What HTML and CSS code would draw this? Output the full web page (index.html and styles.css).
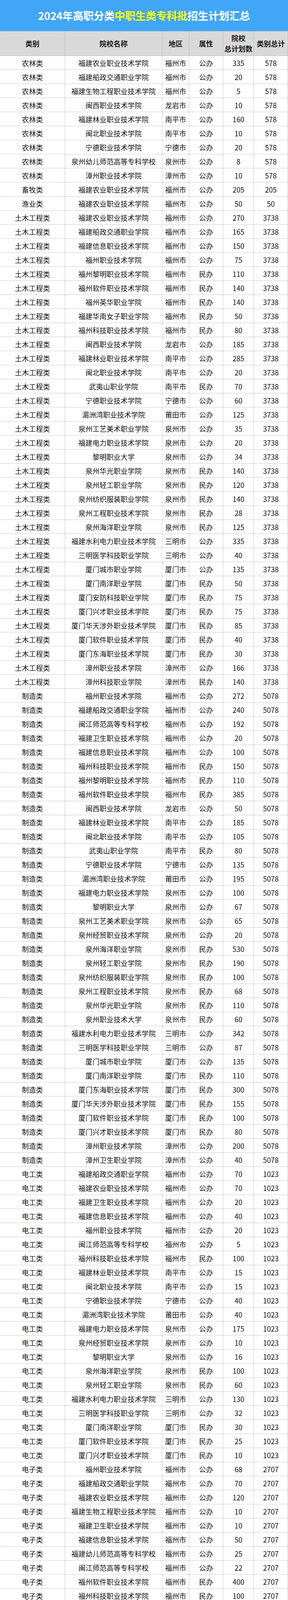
FILE: index.html
```html
<!DOCTYPE html>
<html lang="zh-CN">
<head>
<meta charset="utf-8">
<title>2024年高职分类中职生类专科批招生计划汇总</title>
<link rel="stylesheet" href="styles.css">
</head>
<body>
<div class="sheet" role="table">
  <div class="title">2024年高职分类<span class="hl">中职生类专科批</span>招生计划汇总</div>
  <div class="row head" role="row"><div class="cell" role="columnheader">类别</div><div class="cell" role="columnheader">院校名称</div><div class="cell" role="columnheader">地区</div><div class="cell" role="columnheader">属性</div><div class="cell" role="columnheader">院校<br>总计划数</div><div class="cell" role="columnheader">类别总计</div></div>
  <div class="row"><div class="cell">农林类</div><div class="cell">福建农业职业技术学院</div><div class="cell">福州市</div><div class="cell">公办</div><div class="cell">335</div><div class="cell">578</div></div>
  <div class="row"><div class="cell">农林类</div><div class="cell">福建船政交通职业学院</div><div class="cell">福州市</div><div class="cell">公办</div><div class="cell">20</div><div class="cell">578</div></div>
  <div class="row"><div class="cell">农林类</div><div class="cell">福建生物工程职业技术学院</div><div class="cell">福州市</div><div class="cell">公办</div><div class="cell">5</div><div class="cell">578</div></div>
  <div class="row"><div class="cell">农林类</div><div class="cell">闽西职业技术学院</div><div class="cell">龙岩市</div><div class="cell">公办</div><div class="cell">10</div><div class="cell">578</div></div>
  <div class="row"><div class="cell">农林类</div><div class="cell">福建林业职业技术学院</div><div class="cell">南平市</div><div class="cell">公办</div><div class="cell">160</div><div class="cell">578</div></div>
  <div class="row"><div class="cell">农林类</div><div class="cell">闽北职业技术学院</div><div class="cell">南平市</div><div class="cell">公办</div><div class="cell">10</div><div class="cell">578</div></div>
  <div class="row"><div class="cell">农林类</div><div class="cell">宁德职业技术学院</div><div class="cell">宁德市</div><div class="cell">公办</div><div class="cell">20</div><div class="cell">578</div></div>
  <div class="row"><div class="cell">农林类</div><div class="cell">泉州幼儿师范高等专科学校</div><div class="cell">泉州市</div><div class="cell">公办</div><div class="cell">8</div><div class="cell">578</div></div>
  <div class="row"><div class="cell">农林类</div><div class="cell">漳州职业技术学院</div><div class="cell">漳州市</div><div class="cell">公办</div><div class="cell">10</div><div class="cell">578</div></div>
  <div class="row"><div class="cell">畜牧类</div><div class="cell">福建农业职业技术学院</div><div class="cell">福州市</div><div class="cell">公办</div><div class="cell">205</div><div class="cell">205</div></div>
  <div class="row"><div class="cell">渔业类</div><div class="cell">福建农业职业技术学院</div><div class="cell">福州市</div><div class="cell">公办</div><div class="cell">50</div><div class="cell">50</div></div>
  <div class="row"><div class="cell">土木工程类</div><div class="cell">福建农业职业技术学院</div><div class="cell">福州市</div><div class="cell">公办</div><div class="cell">270</div><div class="cell">3738</div></div>
  <div class="row"><div class="cell">土木工程类</div><div class="cell">福建船政交通职业学院</div><div class="cell">福州市</div><div class="cell">公办</div><div class="cell">165</div><div class="cell">3738</div></div>
  <div class="row"><div class="cell">土木工程类</div><div class="cell">福建信息职业技术学院</div><div class="cell">福州市</div><div class="cell">公办</div><div class="cell">150</div><div class="cell">3738</div></div>
  <div class="row"><div class="cell">土木工程类</div><div class="cell">福州职业技术学院</div><div class="cell">福州市</div><div class="cell">公办</div><div class="cell">75</div><div class="cell">3738</div></div>
  <div class="row"><div class="cell">土木工程类</div><div class="cell">福州黎明职业技术学院</div><div class="cell">福州市</div><div class="cell">民办</div><div class="cell">110</div><div class="cell">3738</div></div>
  <div class="row"><div class="cell">土木工程类</div><div class="cell">福州软件职业技术学院</div><div class="cell">福州市</div><div class="cell">民办</div><div class="cell">140</div><div class="cell">3738</div></div>
  <div class="row"><div class="cell">土木工程类</div><div class="cell">福州英华职业学院</div><div class="cell">福州市</div><div class="cell">民办</div><div class="cell">140</div><div class="cell">3738</div></div>
  <div class="row"><div class="cell">土木工程类</div><div class="cell">福建华南女子职业学院</div><div class="cell">福州市</div><div class="cell">民办</div><div class="cell">50</div><div class="cell">3738</div></div>
  <div class="row"><div class="cell">土木工程类</div><div class="cell">福州科技职业技术学院</div><div class="cell">福州市</div><div class="cell">民办</div><div class="cell">80</div><div class="cell">3738</div></div>
  <div class="row"><div class="cell">土木工程类</div><div class="cell">闽西职业技术学院</div><div class="cell">龙岩市</div><div class="cell">公办</div><div class="cell">185</div><div class="cell">3738</div></div>
  <div class="row"><div class="cell">土木工程类</div><div class="cell">福建林业职业技术学院</div><div class="cell">南平市</div><div class="cell">公办</div><div class="cell">285</div><div class="cell">3738</div></div>
  <div class="row"><div class="cell">土木工程类</div><div class="cell">闽北职业技术学院</div><div class="cell">南平市</div><div class="cell">公办</div><div class="cell">20</div><div class="cell">3738</div></div>
  <div class="row"><div class="cell">土木工程类</div><div class="cell">武夷山职业学院</div><div class="cell">南平市</div><div class="cell">民办</div><div class="cell">70</div><div class="cell">3738</div></div>
  <div class="row"><div class="cell">土木工程类</div><div class="cell">宁德职业技术学院</div><div class="cell">宁德市</div><div class="cell">公办</div><div class="cell">60</div><div class="cell">3738</div></div>
  <div class="row"><div class="cell">土木工程类</div><div class="cell">湄洲湾职业技术学院</div><div class="cell">莆田市</div><div class="cell">公办</div><div class="cell">125</div><div class="cell">3738</div></div>
  <div class="row"><div class="cell">土木工程类</div><div class="cell">泉州工艺美术职业学院</div><div class="cell">泉州市</div><div class="cell">公办</div><div class="cell">35</div><div class="cell">3738</div></div>
  <div class="row"><div class="cell">土木工程类</div><div class="cell">福建电力职业技术学院</div><div class="cell">泉州市</div><div class="cell">公办</div><div class="cell">20</div><div class="cell">3738</div></div>
  <div class="row"><div class="cell">土木工程类</div><div class="cell">黎明职业大学</div><div class="cell">泉州市</div><div class="cell">公办</div><div class="cell">34</div><div class="cell">3738</div></div>
  <div class="row"><div class="cell">土木工程类</div><div class="cell">泉州华光职业学院</div><div class="cell">泉州市</div><div class="cell">民办</div><div class="cell">140</div><div class="cell">3738</div></div>
  <div class="row"><div class="cell">土木工程类</div><div class="cell">泉州轻工职业学院</div><div class="cell">泉州市</div><div class="cell">民办</div><div class="cell">120</div><div class="cell">3738</div></div>
  <div class="row"><div class="cell">土木工程类</div><div class="cell">泉州纺织服装职业学院</div><div class="cell">泉州市</div><div class="cell">民办</div><div class="cell">140</div><div class="cell">3738</div></div>
  <div class="row"><div class="cell">土木工程类</div><div class="cell">泉州工程职业技术学院</div><div class="cell">泉州市</div><div class="cell">民办</div><div class="cell">28</div><div class="cell">3738</div></div>
  <div class="row"><div class="cell">土木工程类</div><div class="cell">泉州海洋职业学院</div><div class="cell">泉州市</div><div class="cell">民办</div><div class="cell">125</div><div class="cell">3738</div></div>
  <div class="row"><div class="cell">土木工程类</div><div class="cell">福建水利电力职业技术学院</div><div class="cell">三明市</div><div class="cell">公办</div><div class="cell">335</div><div class="cell">3738</div></div>
  <div class="row"><div class="cell">土木工程类</div><div class="cell">三明医学科技职业学院</div><div class="cell">三明市</div><div class="cell">公办</div><div class="cell">40</div><div class="cell">3738</div></div>
  <div class="row"><div class="cell">土木工程类</div><div class="cell">厦门城市职业学院</div><div class="cell">厦门市</div><div class="cell">公办</div><div class="cell">135</div><div class="cell">3738</div></div>
  <div class="row"><div class="cell">土木工程类</div><div class="cell">厦门南洋职业学院</div><div class="cell">厦门市</div><div class="cell">民办</div><div class="cell">50</div><div class="cell">3738</div></div>
  <div class="row"><div class="cell">土木工程类</div><div class="cell">厦门安防科技职业学院</div><div class="cell">厦门市</div><div class="cell">民办</div><div class="cell">75</div><div class="cell">3738</div></div>
  <div class="row"><div class="cell">土木工程类</div><div class="cell">厦门兴才职业技术学院</div><div class="cell">厦门市</div><div class="cell">民办</div><div class="cell">75</div><div class="cell">3738</div></div>
  <div class="row"><div class="cell">土木工程类</div><div class="cell">厦门华天涉外职业技术学院</div><div class="cell">厦门市</div><div class="cell">民办</div><div class="cell">85</div><div class="cell">3738</div></div>
  <div class="row"><div class="cell">土木工程类</div><div class="cell">厦门软件职业技术学院</div><div class="cell">厦门市</div><div class="cell">民办</div><div class="cell">40</div><div class="cell">3738</div></div>
  <div class="row"><div class="cell">土木工程类</div><div class="cell">厦门东海职业技术学院</div><div class="cell">厦门市</div><div class="cell">民办</div><div class="cell">30</div><div class="cell">3738</div></div>
  <div class="row"><div class="cell">土木工程类</div><div class="cell">漳州职业技术学院</div><div class="cell">漳州市</div><div class="cell">公办</div><div class="cell">166</div><div class="cell">3738</div></div>
  <div class="row"><div class="cell">土木工程类</div><div class="cell">漳州科技职业学院</div><div class="cell">漳州市</div><div class="cell">民办</div><div class="cell">140</div><div class="cell">3738</div></div>
  <div class="row"><div class="cell">制造类</div><div class="cell">福州职业技术学院</div><div class="cell">福州市</div><div class="cell">公办</div><div class="cell">272</div><div class="cell">5078</div></div>
  <div class="row"><div class="cell">制造类</div><div class="cell">福建船政交通职业学院</div><div class="cell">福州市</div><div class="cell">公办</div><div class="cell">240</div><div class="cell">5078</div></div>
  <div class="row"><div class="cell">制造类</div><div class="cell">闽江师范高等专科学校</div><div class="cell">福州市</div><div class="cell">公办</div><div class="cell">192</div><div class="cell">5078</div></div>
  <div class="row"><div class="cell">制造类</div><div class="cell">福建卫生职业技术学院</div><div class="cell">福州市</div><div class="cell">公办</div><div class="cell">20</div><div class="cell">5078</div></div>
  <div class="row"><div class="cell">制造类</div><div class="cell">福建信息职业技术学院</div><div class="cell">福州市</div><div class="cell">公办</div><div class="cell">100</div><div class="cell">5078</div></div>
  <div class="row"><div class="cell">制造类</div><div class="cell">福州科技职业技术学院</div><div class="cell">福州市</div><div class="cell">民办</div><div class="cell">150</div><div class="cell">5078</div></div>
  <div class="row"><div class="cell">制造类</div><div class="cell">福州黎明职业技术学院</div><div class="cell">福州市</div><div class="cell">民办</div><div class="cell">110</div><div class="cell">5078</div></div>
  <div class="row"><div class="cell">制造类</div><div class="cell">福州软件职业技术学院</div><div class="cell">福州市</div><div class="cell">民办</div><div class="cell">385</div><div class="cell">5078</div></div>
  <div class="row"><div class="cell">制造类</div><div class="cell">闽西职业技术学院</div><div class="cell">龙岩市</div><div class="cell">公办</div><div class="cell">50</div><div class="cell">5078</div></div>
  <div class="row"><div class="cell">制造类</div><div class="cell">福建林业职业技术学院</div><div class="cell">南平市</div><div class="cell">公办</div><div class="cell">185</div><div class="cell">5078</div></div>
  <div class="row"><div class="cell">制造类</div><div class="cell">闽北职业技术学院</div><div class="cell">南平市</div><div class="cell">公办</div><div class="cell">105</div><div class="cell">5078</div></div>
  <div class="row"><div class="cell">制造类</div><div class="cell">武夷山职业学院</div><div class="cell">南平市</div><div class="cell">民办</div><div class="cell">80</div><div class="cell">5078</div></div>
  <div class="row"><div class="cell">制造类</div><div class="cell">宁德职业技术学院</div><div class="cell">宁德市</div><div class="cell">公办</div><div class="cell">135</div><div class="cell">5078</div></div>
  <div class="row"><div class="cell">制造类</div><div class="cell">湄洲湾职业技术学院</div><div class="cell">莆田市</div><div class="cell">公办</div><div class="cell">195</div><div class="cell">5078</div></div>
  <div class="row"><div class="cell">制造类</div><div class="cell">福建电力职业技术学院</div><div class="cell">泉州市</div><div class="cell">公办</div><div class="cell">100</div><div class="cell">5078</div></div>
  <div class="row"><div class="cell">制造类</div><div class="cell">黎明职业大学</div><div class="cell">泉州市</div><div class="cell">公办</div><div class="cell">67</div><div class="cell">5078</div></div>
  <div class="row"><div class="cell">制造类</div><div class="cell">泉州工艺美术职业学院</div><div class="cell">泉州市</div><div class="cell">公办</div><div class="cell">65</div><div class="cell">5078</div></div>
  <div class="row"><div class="cell">制造类</div><div class="cell">泉州经贸职业技术学院</div><div class="cell">泉州市</div><div class="cell">公办</div><div class="cell">20</div><div class="cell">5078</div></div>
  <div class="row"><div class="cell">制造类</div><div class="cell">泉州海洋职业学院</div><div class="cell">泉州市</div><div class="cell">民办</div><div class="cell">530</div><div class="cell">5078</div></div>
  <div class="row"><div class="cell">制造类</div><div class="cell">泉州轻工职业学院</div><div class="cell">泉州市</div><div class="cell">民办</div><div class="cell">190</div><div class="cell">5078</div></div>
  <div class="row"><div class="cell">制造类</div><div class="cell">泉州纺织服装职业学院</div><div class="cell">泉州市</div><div class="cell">民办</div><div class="cell">100</div><div class="cell">5078</div></div>
  <div class="row"><div class="cell">制造类</div><div class="cell">泉州工程职业技术学院</div><div class="cell">泉州市</div><div class="cell">民办</div><div class="cell">68</div><div class="cell">5078</div></div>
  <div class="row"><div class="cell">制造类</div><div class="cell">泉州华光职业学院</div><div class="cell">泉州市</div><div class="cell">民办</div><div class="cell">110</div><div class="cell">5078</div></div>
  <div class="row"><div class="cell">制造类</div><div class="cell">泉州职业技术大学</div><div class="cell">泉州市</div><div class="cell">民办</div><div class="cell">60</div><div class="cell">5078</div></div>
  <div class="row"><div class="cell">制造类</div><div class="cell">福建水利电力职业技术学院</div><div class="cell">三明市</div><div class="cell">公办</div><div class="cell">342</div><div class="cell">5078</div></div>
  <div class="row"><div class="cell">制造类</div><div class="cell">三明医学科技职业学院</div><div class="cell">三明市</div><div class="cell">公办</div><div class="cell">87</div><div class="cell">5078</div></div>
  <div class="row"><div class="cell">制造类</div><div class="cell">厦门城市职业学院</div><div class="cell">厦门市</div><div class="cell">公办</div><div class="cell">135</div><div class="cell">5078</div></div>
  <div class="row"><div class="cell">制造类</div><div class="cell">厦门南洋职业学院</div><div class="cell">厦门市</div><div class="cell">民办</div><div class="cell">110</div><div class="cell">5078</div></div>
  <div class="row"><div class="cell">制造类</div><div class="cell">厦门东海职业技术学院</div><div class="cell">厦门市</div><div class="cell">民办</div><div class="cell">300</div><div class="cell">5078</div></div>
  <div class="row"><div class="cell">制造类</div><div class="cell">厦门华天涉外职业技术学院</div><div class="cell">厦门市</div><div class="cell">民办</div><div class="cell">155</div><div class="cell">5078</div></div>
  <div class="row"><div class="cell">制造类</div><div class="cell">厦门软件职业技术学院</div><div class="cell">厦门市</div><div class="cell">民办</div><div class="cell">100</div><div class="cell">5078</div></div>
  <div class="row"><div class="cell">制造类</div><div class="cell">厦门兴才职业技术学院</div><div class="cell">厦门市</div><div class="cell">民办</div><div class="cell">80</div><div class="cell">5078</div></div>
  <div class="row"><div class="cell">制造类</div><div class="cell">漳州职业技术学院</div><div class="cell">漳州市</div><div class="cell">公办</div><div class="cell">200</div><div class="cell">5078</div></div>
  <div class="row"><div class="cell">制造类</div><div class="cell">漳州卫生职业学院</div><div class="cell">漳州市</div><div class="cell">公办</div><div class="cell">40</div><div class="cell">5078</div></div>
  <div class="row"><div class="cell">电工类</div><div class="cell">福建船政交通职业学院</div><div class="cell">福州市</div><div class="cell">公办</div><div class="cell">70</div><div class="cell">1023</div></div>
  <div class="row"><div class="cell">电工类</div><div class="cell">福建农业职业技术学院</div><div class="cell">福州市</div><div class="cell">公办</div><div class="cell">70</div><div class="cell">1023</div></div>
  <div class="row"><div class="cell">电工类</div><div class="cell">福建卫生职业技术学院</div><div class="cell">福州市</div><div class="cell">公办</div><div class="cell">20</div><div class="cell">1023</div></div>
  <div class="row"><div class="cell">电工类</div><div class="cell">福建信息职业技术学院</div><div class="cell">福州市</div><div class="cell">公办</div><div class="cell">40</div><div class="cell">1023</div></div>
  <div class="row"><div class="cell">电工类</div><div class="cell">福州职业技术学院</div><div class="cell">福州市</div><div class="cell">公办</div><div class="cell">20</div><div class="cell">1023</div></div>
  <div class="row"><div class="cell">电工类</div><div class="cell">闽江师范高等专科学校</div><div class="cell">福州市</div><div class="cell">公办</div><div class="cell">5</div><div class="cell">1023</div></div>
  <div class="row"><div class="cell">电工类</div><div class="cell">福州科技职业技术学院</div><div class="cell">福州市</div><div class="cell">民办</div><div class="cell">100</div><div class="cell">1023</div></div>
  <div class="row"><div class="cell">电工类</div><div class="cell">福建林业职业技术学院</div><div class="cell">南平市</div><div class="cell">公办</div><div class="cell">15</div><div class="cell">1023</div></div>
  <div class="row"><div class="cell">电工类</div><div class="cell">闽北职业技术学院</div><div class="cell">南平市</div><div class="cell">公办</div><div class="cell">15</div><div class="cell">1023</div></div>
  <div class="row"><div class="cell">电工类</div><div class="cell">宁德职业技术学院</div><div class="cell">宁德市</div><div class="cell">公办</div><div class="cell">40</div><div class="cell">1023</div></div>
  <div class="row"><div class="cell">电工类</div><div class="cell">湄洲湾职业技术学院</div><div class="cell">莆田市</div><div class="cell">公办</div><div class="cell">40</div><div class="cell">1023</div></div>
  <div class="row"><div class="cell">电工类</div><div class="cell">福建电力职业技术学院</div><div class="cell">泉州市</div><div class="cell">公办</div><div class="cell">175</div><div class="cell">1023</div></div>
  <div class="row"><div class="cell">电工类</div><div class="cell">泉州经贸职业技术学院</div><div class="cell">泉州市</div><div class="cell">公办</div><div class="cell">10</div><div class="cell">1023</div></div>
  <div class="row"><div class="cell">电工类</div><div class="cell">黎明职业大学</div><div class="cell">泉州市</div><div class="cell">公办</div><div class="cell">16</div><div class="cell">1023</div></div>
  <div class="row"><div class="cell">电工类</div><div class="cell">泉州海洋职业学院</div><div class="cell">泉州市</div><div class="cell">民办</div><div class="cell">100</div><div class="cell">1023</div></div>
  <div class="row"><div class="cell">电工类</div><div class="cell">泉州轻工职业学院</div><div class="cell">泉州市</div><div class="cell">民办</div><div class="cell">60</div><div class="cell">1023</div></div>
  <div class="row"><div class="cell">电工类</div><div class="cell">福建水利电力职业技术学院</div><div class="cell">三明市</div><div class="cell">公办</div><div class="cell">130</div><div class="cell">1023</div></div>
  <div class="row"><div class="cell">电工类</div><div class="cell">三明医学科技职业学院</div><div class="cell">三明市</div><div class="cell">公办</div><div class="cell">32</div><div class="cell">1023</div></div>
  <div class="row"><div class="cell">电工类</div><div class="cell">厦门南洋职业学院</div><div class="cell">厦门市</div><div class="cell">民办</div><div class="cell">30</div><div class="cell">1023</div></div>
  <div class="row"><div class="cell">电工类</div><div class="cell">厦门软件职业技术学院</div><div class="cell">厦门市</div><div class="cell">民办</div><div class="cell">25</div><div class="cell">1023</div></div>
  <div class="row"><div class="cell">电工类</div><div class="cell">厦门兴才职业技术学院</div><div class="cell">厦门市</div><div class="cell">民办</div><div class="cell">10</div><div class="cell">1023</div></div>
  <div class="row"><div class="cell">电子类</div><div class="cell">福州职业技术学院</div><div class="cell">福州市</div><div class="cell">公办</div><div class="cell">68</div><div class="cell">2707</div></div>
  <div class="row"><div class="cell">电子类</div><div class="cell">福建船政交通职业学院</div><div class="cell">福州市</div><div class="cell">公办</div><div class="cell">70</div><div class="cell">2707</div></div>
  <div class="row"><div class="cell">电子类</div><div class="cell">福建农业职业技术学院</div><div class="cell">福州市</div><div class="cell">公办</div><div class="cell">120</div><div class="cell">2707</div></div>
  <div class="row"><div class="cell">电子类</div><div class="cell">福建生物工程职业技术学院</div><div class="cell">福州市</div><div class="cell">公办</div><div class="cell">10</div><div class="cell">2707</div></div>
  <div class="row"><div class="cell">电子类</div><div class="cell">福建卫生职业技术学院</div><div class="cell">福州市</div><div class="cell">公办</div><div class="cell">10</div><div class="cell">2707</div></div>
  <div class="row"><div class="cell">电子类</div><div class="cell">福建信息职业技术学院</div><div class="cell">福州市</div><div class="cell">公办</div><div class="cell">50</div><div class="cell">2707</div></div>
  <div class="row"><div class="cell">电子类</div><div class="cell">福建幼儿师范高等专科学校</div><div class="cell">福州市</div><div class="cell">公办</div><div class="cell">25</div><div class="cell">2707</div></div>
  <div class="row"><div class="cell">电子类</div><div class="cell">闽江师范高等专科学校</div><div class="cell">福州市</div><div class="cell">公办</div><div class="cell">22</div><div class="cell">2707</div></div>
  <div class="row"><div class="cell">电子类</div><div class="cell">福州软件职业技术学院</div><div class="cell">福州市</div><div class="cell">民办</div><div class="cell">400</div><div class="cell">2707</div></div>
  <div class="row"><div class="cell">电子类</div><div class="cell">福州科技职业技术学院</div><div class="cell">福州市</div><div class="cell">民办</div><div class="cell">100</div><div class="cell">2707</div></div>
  <div class="row"><div class="cell">电子类</div><div class="cell">福州英华职业学院</div><div class="cell">福州市</div><div class="cell">民办</div><div class="cell">65</div><div class="cell">2707</div></div>
  <div class="row"><div class="cell">电子类</div><div class="cell">福州墨尔本理工职业学院</div><div class="cell">福州市</div><div class="cell">中外合作</div><div class="cell">120</div><div class="cell">2707</div></div>
  <div class="row"><div class="cell">电子类</div><div class="cell">福建林业职业技术学院</div><div class="cell">南平市</div><div class="cell">公办</div><div class="cell">135</div><div class="cell">2707</div></div>
  <div class="row"><div class="cell">电子类</div><div class="cell">闽北职业技术学院</div><div class="cell">南平市</div><div class="cell">公办</div><div class="cell">30</div><div class="cell">2707</div></div>
  <div class="row"><div class="cell">电子类</div><div class="cell">武夷山职业学院</div><div class="cell">南平市</div><div class="cell">民办</div><div class="cell">75</div><div class="cell">2707</div></div>
</div>
</body>
</html>
```

FILE: styles.css
```css
html, body {
  margin: 0;
  padding: 0;
  background: #ffffff;
}

body {
  font-family: "Noto Sans CJK SC", "Noto Sans", sans-serif;
  color: #111111;
}

.sheet {
  width: 738px;
  display: flex;
  flex-direction: column;
}

.title {
  flex: 0 0 80px;
  height: 80px;
  box-sizing: border-box;
  background: #41a6f7;
  color: #ffffff;
  font-size: 27px;
  font-weight: 700;
  line-height: 30px;
  letter-spacing: -0.3px;
  display: flex;
  align-items: center;
  justify-content: center;
  border-bottom: 1px dotted #8aa0b0;
}

.title .hl {
  color: #ffff00;
}

.row {
  flex: 0 0 36px;
  height: 36px;
  display: grid;
  grid-template-columns: 167px 249px 69px 87px 79px 87px;
  overflow: hidden;
}

.row.head {
  flex: 0 0 63px;
  height: 63px;
  background: #d9d9d9;
  color: #1a1a1a;
  font-weight: 700;
}

.cell {
  box-sizing: border-box;
  display: flex;
  align-items: center;
  justify-content: center;
  text-align: center;
  white-space: nowrap;
  font-size: 18px;
  line-height: 20px;
  border-right: 1px dotted #9a9a9a;
  border-bottom: 1px dotted #9a9a9a;
  overflow: hidden;
}

.row.head .cell {
  line-height: 27px;
}
```
